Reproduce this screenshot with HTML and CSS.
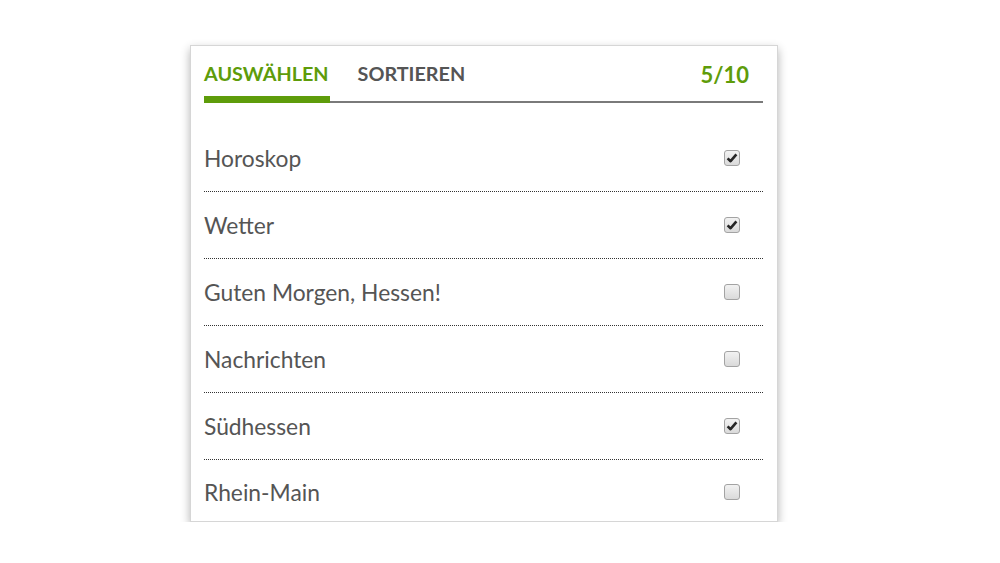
FILE: index.html
```html
<!DOCTYPE html>
<html lang="de">
<head>
<meta charset="utf-8">
<title>Auswahl</title>
<link rel="stylesheet" href="styles.css">
</head>
<body>
<div class="card">
  <div class="tabs">
    <div class="tab active">AUSWÄHLEN</div>
    <div class="tab">SORTIEREN</div>
    <div class="count">5/10</div>
  </div>
  <ul class="list">
    <li class="row"><span class="label">Horoskop</span><span class="box checked"><svg viewBox="0 0 14 14" width="14" height="14"><path d="M2.6 7.4 L5.6 10.2 L11.4 3.4" fill="none" stroke="#262626" stroke-width="2.6" stroke-linejoin="round"/></svg></span></li>
    <li class="row"><span class="label">Wetter</span><span class="box checked"><svg viewBox="0 0 14 14" width="14" height="14"><path d="M2.6 7.4 L5.6 10.2 L11.4 3.4" fill="none" stroke="#262626" stroke-width="2.6" stroke-linejoin="round"/></svg></span></li>
    <li class="row"><span class="label">Guten Morgen, Hessen!</span><span class="box"></span></li>
    <li class="row"><span class="label">Nachrichten</span><span class="box"></span></li>
    <li class="row"><span class="label">Südhessen</span><span class="box checked"><svg viewBox="0 0 14 14" width="14" height="14"><path d="M2.6 7.4 L5.6 10.2 L11.4 3.4" fill="none" stroke="#262626" stroke-width="2.6" stroke-linejoin="round"/></svg></span></li>
    <li class="row last"><span class="label">Rhein-Main</span><span class="box"></span></li>
  </ul>
</div>
</body>
</html>
```
FILE: styles.css
```css
html, body {
  margin: 0;
  padding: 0;
  background: #ffffff;
}
body {
  font-family: Lato, "Open Sans", sans-serif;
  color: #555555;
  padding-top: 45px;
}
.card {
  box-sizing: border-box;
  width: 588px;
  margin-left: 190px;
  border: 1px solid #d6d6d6;
  background: #fff;
  box-shadow: 0 4px 9px rgba(0, 0, 0, 0.3);
  padding: 0 14px 0 13px;
}
.tabs {
  display: flex;
  align-items: stretch;
  height: 57px;
  box-sizing: border-box;
  border-bottom: 2px solid #7a7a7a;
}
.tab {
  position: relative;
  font-size: 19.8px;
  font-weight: 700;
  line-height: 1;
  padding-top: 18px;
  margin-right: 29px;
  color: #555555;
}
.tab.active {
  color: #5e9c0a;
}
.tab.active::after {
  content: "";
  position: absolute;
  left: 0;
  right: -1px;
  bottom: -2px;
  height: 7px;
  background: #5e9c0a;
}
.count {
  margin-left: auto;
  margin-right: 14px;
  font-size: 22px;
  font-weight: 700;
  line-height: 1;
  padding-top: 18px;
  color: #5e9c0a;
}
.list {
  list-style: none;
  margin: 0;
  padding: 22px 0 0;
}
.row {
  display: flex;
  align-items: center;
  justify-content: space-between;
  height: 67px;
  box-sizing: border-box;
  border-bottom: 1px dotted #333;
}
.row.last {
  height: 61px;
  padding-top: 3px;
  border-bottom: none;
}
.label {
  font-size: 22.8px;
  color: #555555;
}
.box {
  width: 14px;
  height: 14px;
  margin-right: 23px;
  border: 1px solid #a3a3a3;
  border-radius: 3px;
  background: linear-gradient(#f2f2f2, #dadada);
  display: flex;
  align-items: center;
  justify-content: center;
  overflow: hidden;
}
.box svg {
  display: block;
  flex: none;
}
```
